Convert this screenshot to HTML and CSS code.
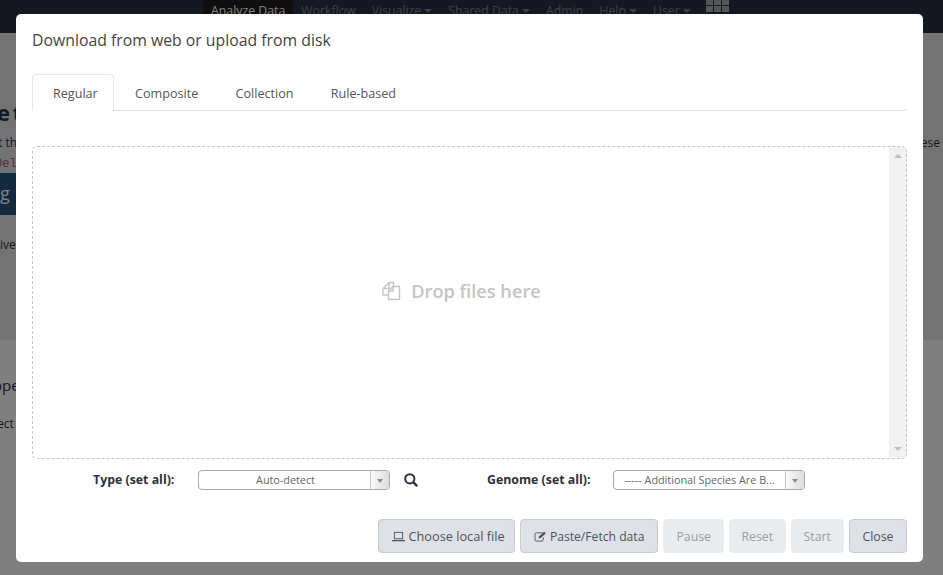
FILE: index.html

```html
<!DOCTYPE html>
<html lang="en">
<head>
    <meta charset="UTF-8">
    <meta name="viewport" content="width=device-width, initial-scale=1.0">
    <title>Download from web or upload from disk</title>
    <link rel="stylesheet" href="styles.css">
</head>
<body>
    <!-- Page behind the dialog -->
    <nav class="navbar">
        <a class="nav-link active">Analyze Data</a>
        <a class="nav-link">Workflow</a>
        <a class="nav-link caret">Visualize</a>
        <a class="nav-link caret">Shared Data</a>
        <a class="nav-link">Admin</a>
        <a class="nav-link caret">Help</a>
        <a class="nav-link caret">User</a>
        <div class="nav-grid">
            <span></span><span></span><span></span>
            <span></span><span></span><span></span>
        </div>
    </nav>
    <section class="hero">
        <div class="hero-title">e t</div>
        <div class="hero-line"><span>t th</span><span>ese</span></div>
        <code class="hero-code">Del</code>
        <div class="hero-button">ng</div>
        <div class="hero-text">ive</div>
    </section>
    <section class="lower">
        <div class="lower-big">ope</div>
        <div class="lower-small">ect</div>
    </section>

    <div class="backdrop"></div>

    <div class="modal">
        <h5 class="modal-title">Download from web or upload from disk</h5>
        <ul class="tabs">
            <li class="tab active">Regular</li>
            <li class="tab">Composite</li>
            <li class="tab">Collection</li>
            <li class="tab">Rule-based</li>
        </ul>

        <div class="dropzone">
            <div class="drop-help">
                <svg class="drop-icon" viewBox="0 0 20 20" fill="none" stroke="currentColor" stroke-width="1.4" stroke-linejoin="round">
                    <path d="M12.5 5 L12.5 1.5 L8 1.5 L2 7.5 L2 14 L7.5 14"/>
                    <path d="M8 1.5 L8 7.5 L2 7.5"/>
                    <path d="M12 5.5 L18.5 5.5 L18.5 18.5 L7.5 18.5 L7.5 10 Z"/>
                    <path d="M12 5.5 L12 10 L7.5 10"/>
                </svg>
                <span>Drop files here</span>
            </div>
            <div class="scrollbar">
                <span class="arrow-up"></span>
                <span class="arrow-down"></span>
            </div>
        </div>

        <div class="settings">
            <span class="set-label type-label">Type (set all):</span>
            <div class="select type-select">
                <span class="select-value">Auto-detect</span>
                <span class="select-arrow"></span>
            </div>
            <svg class="search-icon" viewBox="0 0 14 14" fill="none" stroke="#2c3143" stroke-width="2">
                <circle cx="5.8" cy="5.8" r="4.6"/>
                <path d="M9.2 9.2 L13.2 13.2" stroke-width="2.4"/>
            </svg>
            <span class="set-label genome-label">Genome (set all):</span>
            <div class="select genome-select">
                <span class="select-value">----- Additional Species Are B...</span>
                <span class="select-arrow"></span>
            </div>
        </div>

        <div class="footer">
            <button class="btn choose-btn">
                <svg class="btn-icon" viewBox="0 0 14 12" fill="none" stroke="currentColor">
                    <rect x="2.5" y="1.5" width="9" height="7"/>
                    <path d="M0 10.5 H14" stroke-width="1.4"/>
                </svg>
                Choose local file
            </button>
            <button class="btn paste-btn">
                <svg class="btn-icon" viewBox="0 0 14 12" fill="none" stroke="currentColor">
                    <path d="M9.5 2 H2.5 Q1 2 1 3.5 V9.5 Q1 11 2.5 11 H8.5 Q10 11 10 9.5 V7"/>
                    <path d="M5 8 L5.4 6 L11 0.7 L12.9 2.5 L7 8 Z" fill="currentColor" stroke="none"/>
                </svg>
                Paste/Fetch data
            </button>
            <button class="btn disabled">Pause</button>
            <button class="btn disabled reset-btn">Reset</button>
            <button class="btn disabled">Start</button>
            <button class="btn close-btn">Close</button>
        </div>
    </div>
</body>
</html>
```

FILE: styles.css

```css
* {
    box-sizing: border-box;
}
html, body {
    height: 100%;
}
body {
    margin: 0;
    overflow: hidden;
    background-color: #fff;
    color: #2c3143;
    font-family: "Open Sans", "Noto Sans", sans-serif;
    font-size: 12px;
}

/* Page behind the dialog */
.navbar {
    display: flex;
    height: 33px;
    padding-left: 203px;
    background-color: #2c3143;
    color: #7c8090;
    font-size: 12.3px;
    line-height: 21px;
}
.nav-link {
    padding: 0 8px;
    white-space: nowrap;
}
.nav-link.active {
    height: 33px;
    background-color: #1c1c1f;
    color: #fff;
}
.caret::after {
    content: "";
    display: inline-block;
    margin-left: 3px;
    vertical-align: 2px;
    border-top: 4px solid currentColor;
    border-left: 4px solid transparent;
    border-right: 4px solid transparent;
}
.nav-grid {
    display: grid;
    grid-template-columns: repeat(3, 7px);
    grid-auto-rows: 6px;
    gap: 1px;
    margin: -1px 0 0 7px;
}
.nav-grid span {
    background-color: #a9acb5;
}
.hero {
    height: 307px;
    padding-top: 65px;
    background-color: #e6e7e8;
}
.hero-title {
    font-size: 22px;
    font-weight: 700;
    line-height: 28px;
    margin-left: -3px;
    word-spacing: -3px;
}
.hero-line {
    display: flex;
    justify-content: space-between;
    margin: 8px 3px 0 -2px;
    line-height: 18px;
}
.hero-code {
    display: block;
    margin: 3px 0 0 -5px;
    font-family: "Liberation Mono", monospace;
    font-size: 12px;
    line-height: 18px;
    color: #b8517c;
}
.hero-button {
    width: 40px;
    height: 42px;
    padding-top: 8px;
    background-color: #25527e;
    color: #fff;
    font-size: 18px;
    line-height: 24px;
    text-indent: -11px;
}
.hero-text {
    margin-top: 21px;
    line-height: 18px;
}
.lower {
    padding-top: 33px;
    background-color: #fff;
}
.lower-big {
    margin-left: -7px;
    font-size: 15px;
    line-height: 24px;
}
.lower-small {
    margin: 18px 0 0 -3px;
    line-height: 18px;
}
.backdrop {
    position: absolute;
    inset: 0;
    background-color: rgba(0, 0, 0, 0.5);
}

/* Dialog */
.modal {
    position: absolute;
    left: 16px;
    top: 14px;
    width: 907px;
    height: 548px;
    padding: 15px 16px 9px;
    background-color: #fff;
    border-radius: 5px;
    display: flex;
    flex-direction: column;
    color: #444;
}
.modal-title {
    margin: 0;
    font-size: 15.8px;
    font-weight: 400;
    line-height: 22px;
}
.tabs {
    display: flex;
    list-style: none;
    margin: 23px 0 0 0;
    padding: 0;
    height: 37px;
    border-bottom: 1px solid #dee2e6;
    font-size: 12.6px;
}
.tab {
    height: 37px;
    padding: 10px 15.3px 0 20px;
    line-height: 17px;
    border: 1px solid transparent;
    border-radius: 4px 4px 0 0;
    color: #555;
}
.tab.active {
    background-color: #fff;
    border-color: #e4e7eb #e4e7eb #fff;
}
.dropzone {
    display: flex;
    flex: none;
    height: 313px;
    margin-top: 35px;
    border: 1px dashed #c4c4c4;
    border-radius: 5px;
}
.drop-help {
    flex: 1;
    display: flex;
    align-items: center;
    justify-content: center;
    gap: 10px;
    padding-bottom: 24px;
    color: #c4c4c4;
    font-size: 18.2px;
    font-weight: 600;
}
.drop-icon {
    width: 20px;
    height: 20px;
}
.scrollbar {
    width: 17px;
    display: flex;
    flex-direction: column;
    justify-content: space-between;
    align-items: center;
    padding: 7px 0;
    background-color: #f1f1f1;
}
.arrow-up {
    border-bottom: 4px solid #bdbdbd;
    border-left: 4px solid transparent;
    border-right: 4px solid transparent;
}
.arrow-down {
    border-top: 4px solid #bdbdbd;
    border-left: 4px solid transparent;
    border-right: 4px solid transparent;
}
.settings {
    display: flex;
    align-items: center;
    height: 20px;
    margin-top: 11px;
    padding-left: 61px;
}
.set-label {
    font-size: 12.35px;
    font-weight: 700;
    white-space: nowrap;
    margin-top: -2px;
    color: #2c3143;
}
.type-label {
    width: 105px;
}
.genome-label {
    width: 126px;
}
.select {
    display: flex;
    width: 192px;
    height: 20px;
    border: 1px solid #a8a8a8;
    border-radius: 4px;
    background-color: #fff;
    font-size: 10.8px;
    color: #666;
    line-height: 18px;
}
.select-value {
    flex: 1;
    text-align: center;
    white-space: nowrap;
    overflow: hidden;
}
.type-select .select-value {
    padding-left: 2px;
}
.select-arrow {
    position: relative;
    width: 19px;
    border-left: 1px solid #c8c8c8;
    border-radius: 0 3px 3px 0;
    background: linear-gradient(to right, #fafafa, #dcdcdc);
}
.select-arrow::after {
    content: "";
    position: absolute;
    left: 6px;
    top: 8px;
    border-top: 4px solid #8a8a8a;
    border-left: 3px solid transparent;
    border-right: 3px solid transparent;
}
.search-icon {
    width: 14px;
    height: 14px;
    margin: 0 69px 0 14px;
}
.footer {
    display: flex;
    justify-content: flex-end;
    gap: 5px;
    margin-top: 29px;
}
.btn {
    height: 34px;
    padding: 0 12px;
    border: 1px solid #c6cbd2;
    border-radius: 4px;
    background-color: #dee2e6;
    color: #4d5260;
    font-family: inherit;
    font-size: 12.3px;
}
.choose-btn {
    padding: 0 9px 0 13px;
    font-size: 12.75px;
}
.paste-btn {
    padding: 0 13px 0 13px;
    font-size: 12.15px;
}
.reset-btn {
    padding: 0 11.5px;
}
.close-btn {
    padding: 0 12.5px;
}
.btn.disabled {
    border-color: #e9ecef;
    background-color: #e9ecef;
    color: #9a9da6;
}
.btn-icon {
    width: 13px;
    height: 11px;
    vertical-align: -1px;
}
```
